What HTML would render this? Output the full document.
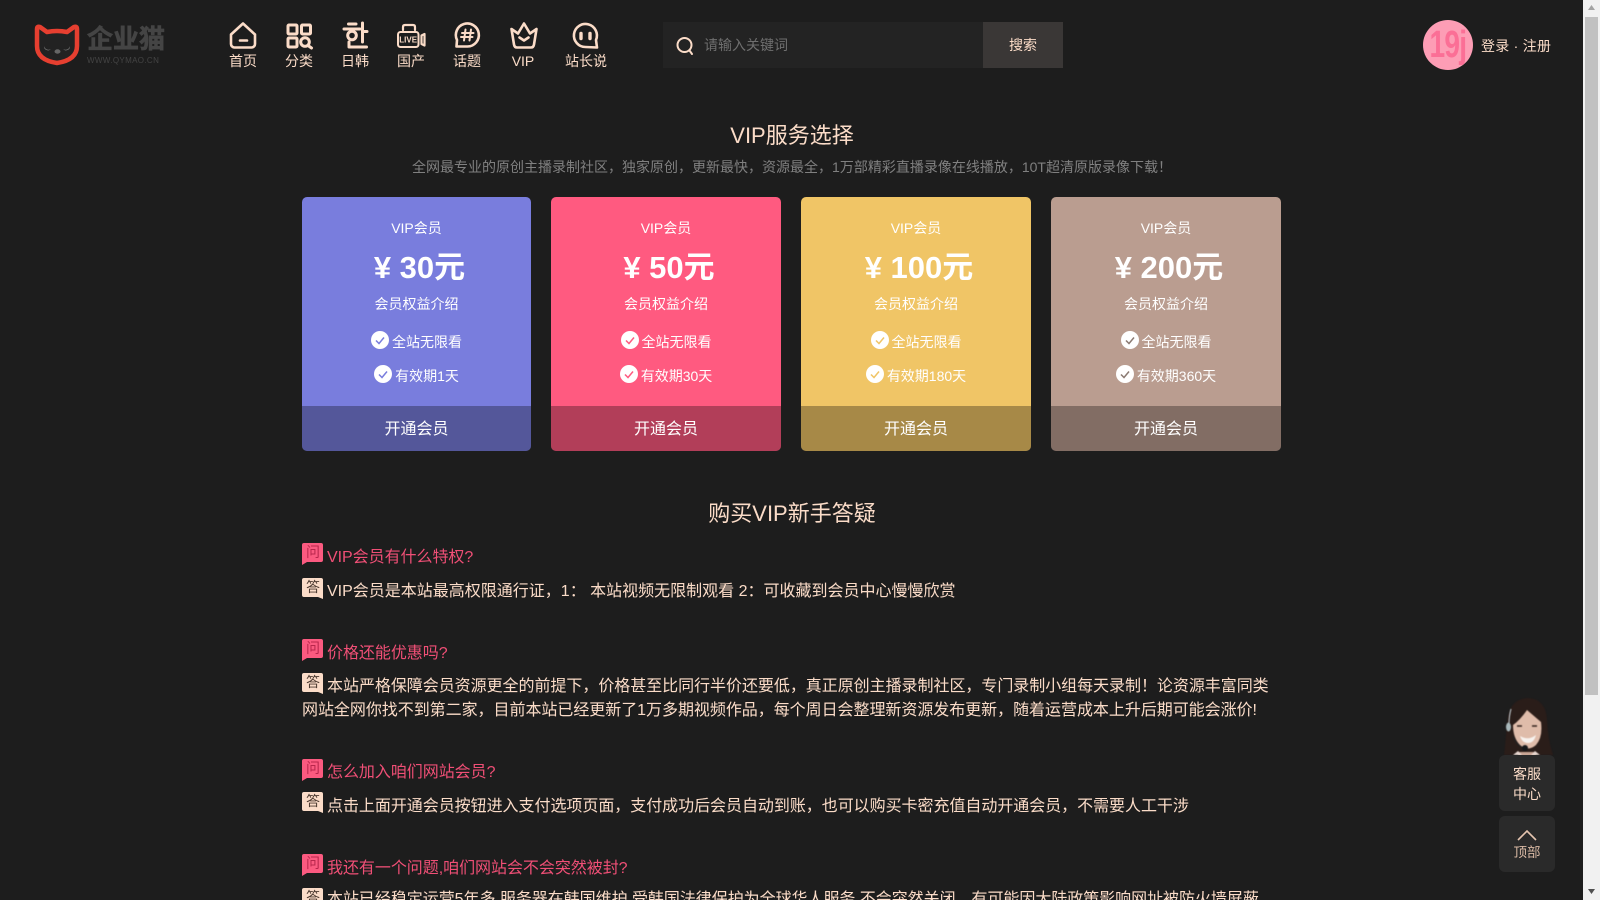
<!DOCTYPE html>
<html lang="zh"><head><meta charset="utf-8"><title>VIP服务选择</title>
<style>
*{box-sizing:border-box}
html,body{margin:0;padding:0;width:1600px;height:900px;overflow:hidden;background:#1d1d1d}
body{position:relative;font-family:"Liberation Sans","Noto Sans CJK SC",sans-serif;color:#fbdcc8}
.t{position:absolute;white-space:nowrap;line-height:24px;height:24px}
.c{text-align:center}
.nav{font-size:14px;width:80px;top:49px}
.card{position:absolute;top:197px;width:230px;height:254px;border-radius:5px;overflow:hidden;color:#fff;text-align:center}
.card div{position:absolute;left:0;width:100%;white-space:nowrap;line-height:24px;height:24px;font-size:14px}
.card .p{top:53px;left:3px;line-height:36px;height:36px;font-size:31px;font-weight:700}
.card .ft{top:209px;height:45px;line-height:47px;font-size:16px;background:rgba(0,0,0,.3)}
.card svg{vertical-align:top;margin-top:1px;margin-right:3px}
.q{color:#f04f76;font-size:16px;left:327px;letter-spacing:-.04px}
.a{font-size:16px;left:327px;letter-spacing:-.04px}
.ic{position:absolute;width:22px;height:22px;left:302px;font-size:14px;line-height:19px;text-align:center}
.ic svg{position:absolute;left:0;top:0}
.ic span{position:relative}
.iq{color:#b8264c}.ia{color:#4c3a30}
.box{position:absolute;left:1499px;width:56px;height:56px;background:#2a2a2a;border-radius:6px}
</style></head><body>

<svg style="position:absolute;left:0;top:0" width="1600" height="900" viewBox="0 0 1600 900" fill="none">
<path d="M37 29 Q37 26 40 27 L47 32 Q57 30 67 32 L74 27 Q77 26 77 29 V46 Q77 60 57 63 Q37 60 37 46Z" fill="#222" stroke="#e63f30" stroke-width="4.500" stroke-linejoin="round"/>
<path d="M44 46a4.500 4.500 0 0 0 7 3a4 4 0 0 1-7-3zM70 46a4.500 4.500 0 0 1-7 3a4 4 0 0 0 7-3z" fill="#777"/>
<ellipse cx="57.500" cy="51.500" rx="3" ry="2.200" fill="#666"/>
<g stroke="#fbdcc8" stroke-width="2.600" stroke-linejoin="round" stroke-linecap="round">
<path d="M231 34.500 L243 23.500 L255 34.500 V44 a3.500 3.500 0 0 1-3.500 3.500 H234.500 a3.500 3.500 0 0 1-3.500-3.500Z"/>
<path d="M240 40.500H247"/>
<g stroke-width="3"><rect x="288" y="25" width="9" height="9" rx="1"/><rect x="301.500" y="25" width="9" height="9" rx="1"/><rect x="288" y="38" width="9" height="9" rx="1"/>
<circle cx="305" cy="42" r="4.300"/><path d="M308 45.500 L311.500 48"/></g>
<g stroke-width="3"><path d="M348.500 24H356M344 29H360"/><circle cx="352" cy="35.500" r="4.300"/><path d="M362.500 23V42M362.500 31.500H367M349 42V47H366.500"/></g>
<rect x="398" y="32" width="20.500" height="15" rx="2.500" stroke-width="2"/>
<path d="M403 30V27Q403 25 405 25H413Q415 25 415 27V30M421.500 35.500L424.500 34V45.500L421.500 44Z" stroke-width="2.200"/>
<path d="M467.500 46.500 A11.500 11.500 0 1 0 457 40 L456.500 46.500Z"/>
<path d="M465.500 29.500L464 40.500M471 29.500L469.500 40.500M462 33H473.500M461 37H472.500" stroke-width="2"/>
<path d="M511.500 29 L518 33.500 L524 23.500 L530 33.500 L536.500 29 L534 44.500 Q533.500 47.500 531 47.500 H517 Q514.500 47.500 514 44.500Z"/>
<path d="M519.500 37.500 L524 40.500 L528.500 37.500"/>
<path d="M585.500 47 A11.500 11.500 0 1 1 596 40 L597 47.500Z"/>
<path d="M581 33.500V38.500M590 33.500V38.500" stroke-width="3.400"/>
</g>
<text x="408.200" y="42.500" text-anchor="middle" font-size="8" font-weight="700" fill="#fbdcc8" font-family="Liberation Sans">LIVE</text>
<rect x="1583" y="0" width="17" height="900" fill="#f1f1f1"/>
<rect x="1585" y="17" width="13" height="678" fill="#c1c1c1"/>
<path d="M1588 10L1591.500 5L1595 10Z" fill="#a3a3a3"/><path d="M1588 889L1591.500 894L1595 889Z" fill="#505050"/>
<g style="filter:blur(.5px)">
<path d="M1504 755 Q1506 738 1507 722 Q1509 699 1528 698 Q1546 699 1547 720 Q1548 740 1553 755Z" fill="#2a1d19"/>
<path d="M1518 752 h18 v4 h-18z" fill="#c9a594"/>
<path d="M1513 725 Q1520 720 1527 710 Q1534 716 1541 722 Q1543 737 1536 745 Q1528 752 1520 745 Q1513 738 1513 725Z" fill="#dfbcaa"/>
<path d="M1520 736 Q1528 741 1536 735 Q1534 743 1528 743 Q1522 743 1520 736Z" fill="#f7f2ee"/>
<path d="M1517 726h5M1532 726h5" stroke="#33231e" stroke-width="1.600"/>
<path d="M1511 709 Q1509 716 1509 724" stroke="#c9d3d8" stroke-width="1"/>
<ellipse cx="1508.500" cy="727" rx="2.500" ry="4.500" fill="#a8b8bb"/>
<path d="M1513 737 Q1517 746 1524 748" stroke="#222" stroke-width="1"/>
<circle cx="1525" cy="748" r="3" fill="#15181a"/>
<path d="M1513 755 L1518 751 L1522 755ZM1540 755 L1535 751 L1531 755Z" fill="#e6d6cf"/>
</g>
</svg>

<div class="t" style="left:87px;top:25px;line-height:28px;height:28px;font-size:26px;font-weight:700;color:#444;-webkit-text-stroke:.7px #444">企业猫</div>
<div class="t" style="left:87px;top:49px;font-size:8px;color:#444;letter-spacing:.35px">WWW.QYMAO.CN</div>

<div class="t c nav" style="left:203px">首页</div>
<div class="t c nav" style="left:259px">分类</div>
<div class="t c nav" style="left:315px">日韩</div>
<div class="t c nav" style="left:371px">国产</div>
<div class="t c nav" style="left:427px">话题</div>
<div class="t c nav" style="left:483px">VIP</div>
<div class="t c nav" style="left:546px">站长说</div>

<div style="position:absolute;left:663px;top:22px;width:320px;height:46px;background:#232323"></div>
<svg style="position:absolute;left:675px;top:35px" width="22" height="22" fill="none"><circle cx="9.500" cy="10" r="7" stroke="#fbdcc8" stroke-width="2"/><path d="M14.500 15.500L17 19" stroke="#fbdcc8" stroke-width="2" stroke-linecap="round"/></svg>
<div class="t" style="left:704px;top:33px;font-size:14px;color:#6f6f6f">请输入关键词</div>
<div class="t c" style="left:983px;top:22px;width:80px;height:46px;line-height:46px;background:#3a3736;font-size:14px">搜索</div>

<div style="position:absolute;left:1423px;top:20px;width:50px;height:50px;border-radius:50%;background:#fd9db5;overflow:hidden;text-align:center;color:#fb6f96;font-weight:700;font-size:38px;line-height:50px"><span style="display:inline-block;transform:scaleX(.74);letter-spacing:-1px">19j</span></div>
<div class="t" style="left:1481px;top:34px;font-size:14px;letter-spacing:.25px">登录 · 注册</div>

<div class="t c" style="left:592px;width:400px;top:123.500px;font-size:22px">VIP服务选择</div>
<div class="t c" style="left:292px;width:1000px;top:155px;font-size:14px;color:#808080">全网最专业的原创主播录制社区，独家原创，更新最快，资源最全，1万部精彩直播录像在线播放，10T超清原版录像下载！</div>

<div class="card" style="left:302px;width:229px;background:#797ddd">
<div style="top:19px">VIP会员</div><div class="p">¥ 30元</div><div style="top:95px">会员权益介绍</div>
<div style="top:133px"><svg width="18" height="18" viewBox="0 0 18 18"><circle cx="9" cy="9" r="9" fill="#fff"/><path d="M5 9.500L8 12.500L13 6.500" stroke="#797ddd" stroke-width="1.500" fill="none"/></svg>全站无限看</div>
<div style="top:167px"><svg width="18" height="18" viewBox="0 0 18 18"><circle cx="9" cy="9" r="9" fill="#fff"/><path d="M5 9.500L8 12.500L13 6.500" stroke="#797ddd" stroke-width="1.500" fill="none"/></svg>有效期1天</div>
<div class="ft">开通会员</div></div>

<div class="card" style="left:551px;background:#ff5a80">
<div style="top:19px">VIP会员</div><div class="p">¥ 50元</div><div style="top:95px">会员权益介绍</div>
<div style="top:133px"><svg width="18" height="18" viewBox="0 0 18 18"><circle cx="9" cy="9" r="9" fill="#fff"/><path d="M5 9.500L8 12.500L13 6.500" stroke="#ff5a80" stroke-width="1.500" fill="none"/></svg>全站无限看</div>
<div style="top:167px"><svg width="18" height="18" viewBox="0 0 18 18"><circle cx="9" cy="9" r="9" fill="#fff"/><path d="M5 9.500L8 12.500L13 6.500" stroke="#ff5a80" stroke-width="1.500" fill="none"/></svg>有效期30天</div>
<div class="ft">开通会员</div></div>

<div class="card" style="left:801px;background:#f0c566">
<div style="top:19px">VIP会员</div><div class="p">¥ 100元</div><div style="top:95px">会员权益介绍</div>
<div style="top:133px"><svg width="18" height="18" viewBox="0 0 18 18"><circle cx="9" cy="9" r="9" fill="#fff"/><path d="M5 9.500L8 12.500L13 6.500" stroke="#f0c566" stroke-width="1.500" fill="none"/></svg>全站无限看</div>
<div style="top:167px"><svg width="18" height="18" viewBox="0 0 18 18"><circle cx="9" cy="9" r="9" fill="#fff"/><path d="M5 9.500L8 12.500L13 6.500" stroke="#f0c566" stroke-width="1.500" fill="none"/></svg>有效期180天</div>
<div class="ft">开通会员</div></div>

<div class="card" style="left:1051px;background:#ba9d90">
<div style="top:19px">VIP会员</div><div class="p">¥ 200元</div><div style="top:95px">会员权益介绍</div>
<div style="top:133px"><svg width="18" height="18" viewBox="0 0 18 18"><circle cx="9" cy="9" r="9" fill="#fff"/><path d="M5 9.500L8 12.500L13 6.500" stroke="#8b7a72" stroke-width="1.500" fill="none"/></svg>全站无限看</div>
<div style="top:167px"><svg width="18" height="18" viewBox="0 0 18 18"><circle cx="9" cy="9" r="9" fill="#fff"/><path d="M5 9.500L8 12.500L13 6.500" stroke="#8b7a72" stroke-width="1.500" fill="none"/></svg>有效期360天</div>
<div class="ft">开通会员</div></div>

<div class="t c" style="left:592px;width:400px;top:502px;font-size:22px">购买VIP新手答疑</div>

<div class="ic iq" style="top:543px"><svg width="22" height="22"><path d="M2 0H19a2 2 0 0 1 2 2V17a2 2 0 0 1-2 2H5L0 22V2a2 2 0 0 1 2-2Z" fill="#fb5a80"/></svg><span>问</span></div>
<div class="t q" style="top:546px">VIP会员有什么特权?</div>
<div class="ic ia" style="top:578px"><svg width="22" height="22"><path d="M2 0H19a2 2 0 0 1 2 2V21L16 19H2a2 2 0 0 1-2-2V2a2 2 0 0 1 2-2Z" fill="#fbdcc8"/></svg><span>答</span></div>
<div class="t a" style="top:580px;letter-spacing:0">VIP会员是本站最高权限通行证，1： 本站视频无限制观看 2：可收藏到会员中心慢慢欣赏</div>

<div class="ic iq" style="top:639px"><svg width="22" height="22"><path d="M2 0H19a2 2 0 0 1 2 2V17a2 2 0 0 1-2 2H5L0 22V2a2 2 0 0 1 2-2Z" fill="#fb5a80"/></svg><span>问</span></div>
<div class="t q" style="top:642px">价格还能优惠吗?</div>
<div class="ic ia" style="top:673px"><svg width="22" height="22"><path d="M2 0H19a2 2 0 0 1 2 2V21L16 19H2a2 2 0 0 1-2-2V2a2 2 0 0 1 2-2Z" fill="#fbdcc8"/></svg><span>答</span></div>
<div class="t a" style="top:675px">本站严格保障会员资源更全的前提下，价格甚至比同行半价还要低，真正原创主播录制社区，专门录制小组每天录制！论资源丰富同类</div>
<div class="t" style="left:302px;top:699px;font-size:16px;letter-spacing:-.04px">网站全网你找不到第二家，目前本站已经更新了1万多期视频作品，每个周日会整理新资源发布更新，随着运营成本上升后期可能会涨价!</div>

<div class="ic iq" style="top:759px"><svg width="22" height="22"><path d="M2 0H19a2 2 0 0 1 2 2V17a2 2 0 0 1-2 2H5L0 22V2a2 2 0 0 1 2-2Z" fill="#fb5a80"/></svg><span>问</span></div>
<div class="t q" style="top:761px">怎么加入咱们网站会员?</div>
<div class="ic ia" style="top:792px"><svg width="22" height="22"><path d="M2 0H19a2 2 0 0 1 2 2V21L16 19H2a2 2 0 0 1-2-2V2a2 2 0 0 1 2-2Z" fill="#fbdcc8"/></svg><span>答</span></div>
<div class="t a" style="top:795px">点击上面开通会员按钮进入支付选项页面，支付成功后会员自动到账，也可以购买卡密充值自动开通会员，不需要人工干涉</div>

<div class="ic iq" style="top:854px"><svg width="22" height="22"><path d="M2 0H19a2 2 0 0 1 2 2V17a2 2 0 0 1-2 2H5L0 22V2a2 2 0 0 1 2-2Z" fill="#fb5a80"/></svg><span>问</span></div>
<div class="t q" style="top:857px">我还有一个问题,咱们网站会不会突然被封?</div>
<div class="ic ia" style="top:888px"><svg width="22" height="22"><path d="M2 0H19a2 2 0 0 1 2 2V21L16 19H2a2 2 0 0 1-2-2V2a2 2 0 0 1 2-2Z" fill="#fbdcc8"/></svg><span>答</span></div>
<div class="t a" style="top:888px">本站已经稳定运营5年多,服务器在韩国维护,受韩国法律保护为全球华人服务,不会突然关闭，有可能因大陆政策影响网址被防火墙屏蔽</div>

<div class="box" style="top:755px;text-align:center;font-size:14px;line-height:20px;padding-top:9px">客服<br>中心</div>
<div class="box" style="top:816px;text-align:center;font-size:13.500px;color:#d9b9a4;line-height:20px;padding-top:27px">
<svg style="position:absolute;left:18px;top:13px" width="20" height="12" fill="none"><path d="M1 11L10 2L19 11" stroke="#e6c5b0" stroke-width="1.600"/></svg>顶部</div>

</body></html>
